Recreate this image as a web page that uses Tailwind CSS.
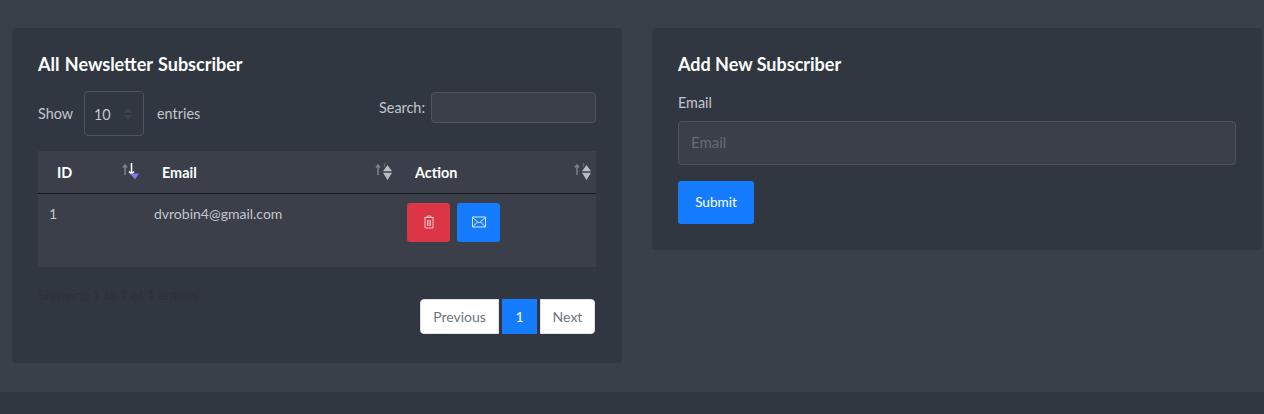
<!DOCTYPE html>
<html>
<head>
<meta charset="utf-8">
<script src="https://cdn.jsdelivr.net/npm/@tailwindcss/browser@4"></script>
</head>
<body class="bg-[#3a404a] font-['Lato','Noto_Sans',sans-serif] text-[14.4px] text-[#c2c6cc] h-[414px] overflow-hidden flex flex-col">
<main class="h-[392px] pt-[28px] pl-[12px] flex items-start gap-[30px]">
  <section class="w-[610px] h-[335px] bg-[#313740] rounded-[4px] px-[26px] pt-[24px]">
    <h2 class="text-[18px] leading-[24px] font-bold text-white [word-spacing:1px]">All Newsletter Subscriber</h2>
    <div class="flex justify-between h-[75px]">
      <div class="flex items-center h-[43px] mt-[16px]">
        <span class="w-[46px]">Show</span>
        <div class="w-[60px] h-[45px] border border-[#4e535d] rounded-[4px] flex items-center pl-[9px] pt-[3px] relative">10
          <svg class="absolute left-[39px] top-[16px]" width="8" height="12" viewBox="0 0 8 12"><path d="M4 0 8 5H0zM4 12 0 7h8z" fill="#3c414b"/></svg>
        </div>
        <span class="ml-[13px]">entries</span>
      </div>
      <div class="flex items-start mt-[16px]">
        <span class="leading-[22px] mt-[5px] mr-[6px]">Search:</span>
        <div class="w-[165px] h-[31px] bg-[#3a3f4a] border border-[#4e535d] rounded-[4px]"></div>
      </div>
    </div>
    <table class="w-[558px] table-fixed border-collapse bg-[#3a3f4a] text-[14px]">
      <thead>
        <tr class="h-[42px] border-b border-[#15181c] text-white font-bold text-[14.4px]">
          <th class="w-[105px] text-left pl-[19px] pt-[2px] relative">ID
            <svg class="absolute left-[84px] top-[12px]" width="18" height="18" viewBox="0 0 18 18"><path d="M3 12V2M1 4.500l2-2.500 2 2.500" stroke="#7e838a" stroke-width="1.500" fill="none"/><path d="M9.500 0v11M7 8.500l2.500 2.500 2.500-2.500" stroke="#fff" stroke-width="1.500" fill="none"/><path d="M8 10.500h9l-4 6z" fill="#7c7de6"/></svg>
          </th>
          <th class="w-[253px] text-left pl-[19px] pt-[2px] relative">Email
            <svg class="absolute left-[232px] top-[12px]" width="18" height="18" viewBox="0 0 18 18"><path d="M3 12V2M1 4.500l2-2.500 2 2.500" stroke="#7e838a" stroke-width="1.500" fill="none"/><path d="M9.500 0v4" stroke="#5f636a" stroke-width="1.500" fill="none"/><path d="M12.500 2 17 8.300H8zM12.500 17 8 9.700h9z" fill="#b9bcc1"/></svg>
          </th>
          <th class="w-[200px] text-left pl-[19px] pt-[2px] relative">Action
            <svg class="absolute left-[178px] top-[12px]" width="18" height="18" viewBox="0 0 18 18"><path d="M3 12V2M1 4.500l2-2.500 2 2.500" stroke="#7e838a" stroke-width="1.500" fill="none"/><path d="M9.500 0v4" stroke="#5f636a" stroke-width="1.500" fill="none"/><path d="M12.500 2 17 8.300H8zM12.500 17 8 9.700h9z" fill="#b9bcc1"/></svg>
          </th>
        </tr>
      </thead>
      <tbody>
        <tr class="h-[74px] align-top">
          <td class="pl-[11px] pt-[9px] leading-[22px]">1</td>
          <td class="pl-[11px] pt-[9px] leading-[22px]">dvrobin4@gmail.com</td>
          <td class="pl-[11px] pt-[9px]">
            <div class="flex gap-[7px]">
              <div class="w-[43px] h-[39px] bg-[#dc3545] rounded-[3px] flex items-center justify-center">
                <svg width="12" height="14" viewBox="0 0 12 14" fill="none" stroke="#f7c2c8" stroke-width="1"><path d="M1 2.500h10M4 2.500V1h4v1.500M2 2.500V13h8V2.500M4.500 5v6M6 5v6M7.500 5v6"/></svg>
              </div>
              <div class="w-[43px] h-[39px] bg-[#167cff] rounded-[3px] flex items-center justify-center">
                <svg width="14" height="12" viewBox="0 0 14 12" fill="none" stroke="#d9e9ff" stroke-width="1"><path d="M.5 1h13v10H.5zM.5 1.500 7 7l6.500-5.500M.5 11l5-5M13.500 11l-5-5"/></svg>
              </div>
            </div>
          </td>
        </tr>
      </tbody>
    </table>
    <div class="flex justify-between items-start mt-[17px]">
      <span class="text-[#2d3139] text-[13.6px] leading-[22px]">Showing 1 to 1 of 1 entries</span>
      <nav class="flex gap-[3px] mt-[15px] mr-[1px] text-[14px]">
        <a class="w-[79px] h-[35px] bg-white border border-[#dee2e6] text-[#6c757d] rounded-l-[4px] flex items-center justify-center">Previous</a>
        <a class="w-[35px] h-[35px] bg-[#167cff] text-white flex items-center justify-center">1</a>
        <a class="w-[55px] h-[35px] bg-white border border-[#dee2e6] text-[#6c757d] rounded-r-[4px] flex items-center justify-center">Next</a>
      </nav>
    </div>
  </section>
  <section class="w-[610px] h-[222px] bg-[#313740] rounded-[4px] pl-[26px] pr-[26px] pt-[24px] shrink-0">
    <h2 class="text-[18px] leading-[24px] font-bold text-white">Add New Subscriber</h2>
    <label class="block mt-[16px] leading-[22px]">Email</label>
    <div class="mt-[7px] w-[558px] h-[44px] bg-[#3a3f4a] border border-[#4e535d] rounded-[4px] flex items-center pl-[12px] pb-[2px] text-[15px] text-[#666b74]">Email</div>
    <button class="block mt-[16px] w-[76px] h-[43px] bg-[#167cff] rounded-[3px] text-white text-[13.6px]">Submit</button>
  </section>
</main>
<footer class="h-[22px] bg-[#313740]"></footer>
</body>
</html>
